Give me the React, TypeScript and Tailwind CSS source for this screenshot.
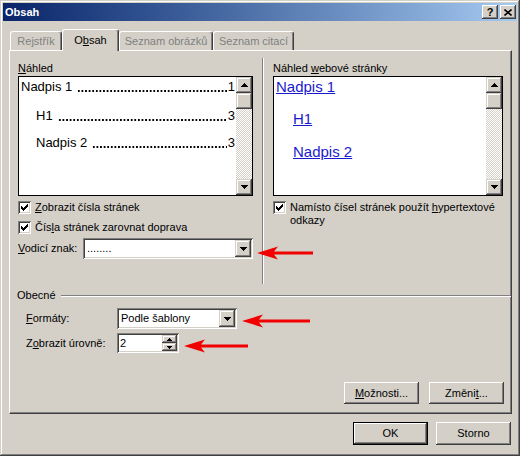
import React from 'react';

const raised =
  'shadow-[inset_-1px_-1px_#404040,inset_1px_1px_#ffffff,inset_-2px_-2px_#808080,inset_2px_2px_#d4d0c8]';
const scrollBtn =
  'shadow-[inset_-1px_-1px_#404040,inset_1px_1px_#d4d0c8,inset_-2px_-2px_#808080,inset_2px_2px_#ffffff]';
const sunken =
  'shadow-[inset_1px_1px_#808080,inset_-1px_-1px_#ffffff,inset_2px_2px_#404040,inset_-2px_-2px_#d4d0c8]';

// pixel triangle, 7x4
function Tri({ down = false }: { down?: boolean }) {
  const rows = down ? [0, 1, 2, 3] : [3, 2, 1, 0];
  return (
    <svg width="7" height="4" viewBox="0 0 7 4" shapeRendering="crispEdges" className="block">
      {rows.map((r, i) => (
        <rect key={i} x={r} y={i} width={7 - r * 2} height="1" fill="#000" />
      ))}
    </svg>
  );
}

function SmallTri({ down = false }: { down?: boolean }) {
  const rows = down ? [0, 1, 2] : [2, 1, 0];
  return (
    <svg width="5" height="3" viewBox="0 0 5 3" shapeRendering="crispEdges" className="block">
      {rows.map((r, i) => (
        <rect key={i} x={r} y={i} width={5 - r * 2} height="1" fill="#000" />
      ))}
    </svg>
  );
}

function ScrollBar() {
  return (
    <div className="flex w-[16px] shrink-0 flex-col">
      <div className={`flex h-[16px] items-center justify-center bg-[#d4d0c8] ${scrollBtn}`}>
        <Tri />
      </div>
      <div className={`h-[16px] bg-[#d4d0c8] ${scrollBtn}`} />
      <div className="flex-1 bg-[image:repeating-conic-gradient(#ffffff_0_25%,#d4d0c8_0_50%)] bg-[length:2px_2px]" />
      <div className={`flex h-[16px] items-center justify-center bg-[#d4d0c8] ${scrollBtn}`}>
        <Tri down />
      </div>
    </div>
  );
}

function CheckBox() {
  const cols = [5, 6, 7, 6, 5, 4, 3];
  return (
    <div className={`h-[13px] w-[13px] shrink-0 bg-white ${sunken}`}>
      <svg width="13" height="13" viewBox="0 0 13 13" shapeRendering="crispEdges" className="block">
        {cols.map((y, i) => (
          <rect key={i} x={3 + i} y={y} width="1" height="3" fill="#000" />
        ))}
      </svg>
    </div>
  );
}

function Combo({ className, children }: { className: string; children: React.ReactNode }) {
  return (
    <div className={`flex h-[21px] bg-white p-[2px] ${sunken} ${className}`}>
      <div className="flex min-w-0 flex-1 items-center overflow-hidden whitespace-nowrap pl-[2px]">{children}</div>
      <div className={`flex w-[16px] items-center justify-center bg-[#d4d0c8] ${scrollBtn}`}>
        <Tri down />
      </div>
    </div>
  );
}

function Btn({ className = 'h-[22px]', children }: { className?: string; children: React.ReactNode }) {
  return (
    <div className={`flex w-[75px] items-center justify-center bg-[#d4d0c8] ${raised} ${className}`}>{children}</div>
  );
}

function Tab({ active = false, className, children }: { active?: boolean; className: string; children: React.ReactNode }) {
  return (
    <div
      className={`flex items-center justify-center rounded-t-[3px] border-x border-t border-l-white border-t-white border-r-[#404040] bg-[#d4d0c8] shadow-[inset_-1px_0_#808080] ${
        active ? 'h-[22px] text-black' : 'mb-[1px] h-[19px] text-[#808080]'
      } ${className}`}
    >
      {children}
    </div>
  );
}

// TOC line with dot leaders drawn as a background
function LeaderRow({ className, text, num }: { className: string; text: string; num: string }) {
  return (
    <div className={`flex h-[20px] whitespace-nowrap pr-[1px] ${className}`}>
      <span>{text}</span>
      <span className="ml-[5px] mr-[1px] min-w-0 flex-1 bg-[image:radial-gradient(circle,#000_0.8px,transparent_1.2px)] bg-[length:3.6px_4px] bg-[position:0_12px] bg-repeat-x" />
      <span>{num}</span>
    </div>
  );
}

function RedArrow({ className, w }: { className: string; w: number }) {
  return (
    <svg className={`absolute ${className}`} width={w} height="14" viewBox={`0 0 ${w} 14`}>
      <path d={`M0 7L21 0.5L17 5.5H${w}V8.5H17L21 13.5Z`} fill="#f20000" />
    </svg>
  );
}

export default function App() {
  return (
    <div className="relative flex h-[456px] w-[520px] flex-col bg-[#d4d0c8] p-[3px] font-['Liberation_Sans',Arial,sans-serif] text-[11px] leading-[13px] text-black shadow-[inset_-1px_-1px_#404040,inset_1px_1px_#d4d0c8,inset_-2px_-2px_#808080,inset_2px_2px_#ffffff]">
      {/* title bar */}
      <div className="flex h-[18px] shrink-0 items-center justify-between bg-linear-to-r from-[#0a246a] to-[#a6caf0] pl-[2px] pr-[1px]">
        <span className="font-bold text-white">Obsah</span>
        <div className="flex gap-[2px]">
          <div className={`flex h-[14px] w-[16px] items-center justify-center bg-[#d4d0c8] font-bold ${raised}`}>?</div>
          <div className={`flex h-[14px] w-[16px] items-center justify-center bg-[#d4d0c8] ${raised}`}>
            <svg width="8" height="7" viewBox="0 0 8 7" className="block">
              <path d="M0.5 0.5L7.5 6.5M7.5 0.5L0.5 6.5" stroke="#000" strokeWidth="1.6" />
            </svg>
          </div>
        </div>
      </div>

      {/* tabs */}
      <div className="relative z-10 -mb-[1px] ml-[7px] mt-[8px] flex h-[22px] items-end">
        <Tab className="w-[52px]">Rejstřík</Tab>
        <Tab active className="w-[57px]">
          <span>
            O<u>b</u>sah
          </span>
        </Tab>
        <Tab className="w-[94px]">Seznam obrázků</Tab>
        <Tab className="w-[81px]">Seznam citací</Tab>
      </div>

      {/* tab panel */}
      <div className="ml-[6px] flex h-[364px] w-[503px] flex-col border border-white border-r-[#404040] border-b-[#404040] shadow-[inset_-1px_-1px_#808080]">
        <div className="flex items-start">
          <div className="ml-[8px] mt-[11px] flex w-[235px] flex-col">
            <div className="h-[13px]">
              <u>N</u>áhled
            </div>
            <div className="mt-[1px] flex h-[120px] border border-black bg-white">
              <div className="flex min-w-0 flex-1 flex-col text-[13px] leading-[20px]">
                <LeaderRow className="pl-[2px]" text="Nadpis 1" num="1" />
                <LeaderRow className="mt-[9px] pl-[17px]" text="H1" num="3" />
                <LeaderRow className="mt-[7px] pl-[17px]" text="Nadpis 2" num="3" />
              </div>
              <ScrollBar />
            </div>
            <div className="mt-[5px] flex h-[13px] items-center">
              <CheckBox />
              <span className="ml-[4px] whitespace-nowrap">
                <u>Z</u>obrazit čísla stránek
              </span>
            </div>
            <div className="mt-[7px] flex h-[13px] items-center">
              <CheckBox />
              <span className="ml-[4px] whitespace-nowrap">
                Čís<u>l</u>a stránek zarovnat doprava
              </span>
            </div>
            <div className="mt-[4px] flex h-[21px] items-center">
              <span className="w-[65px]">
                <u>V</u>odicí znak:
              </span>
              <Combo className="w-[170px]">........</Combo>
            </div>
          </div>

          <div className="ml-[9px] mt-[7px] h-[226px] w-[2px] border-l border-r border-l-[#808080] border-r-white" />

          <div className="ml-[9px] mt-[11px] flex w-[230px] flex-col">
            <div className="h-[13px]">
              Náhled <u>w</u>ebové stránky
            </div>
            <div className="mt-[1px] flex h-[120px] border border-black bg-white">
              <div className="flex min-w-0 flex-1 flex-col text-[15px] leading-[20px] text-[#1a1acd]">
                <div className="h-[20px] pl-[2px]">
                  <span className="underline">Nadpis 1</span>
                </div>
                <div className="mt-[12px] h-[20px] pl-[19px]">
                  <span className="underline">H1</span>
                </div>
                <div className="mt-[13px] h-[20px] pl-[19px]">
                  <span className="underline">Nadpis 2</span>
                </div>
              </div>
              <ScrollBar />
            </div>
            <div className="mt-[5px] flex items-start">
              <CheckBox />
              <span className="ml-[4px] whitespace-nowrap">
                Namísto čísel stránek použít <u>h</u>ypertextové
                <br />
                odkazy
              </span>
            </div>
          </div>
        </div>

        {/* Obecné */}
        <div className="mt-[5px] flex h-[13px] items-center pl-[7px]">
          <span>Obecné</span>
          <div className="ml-[5px] h-[2px] flex-1 border-t border-b border-t-[#808080] border-b-white" />
        </div>
        <div className="mt-[6px] flex h-[21px] items-center pl-[16px]">
          <span className="w-[91px]">
            <u>F</u>ormáty:
          </span>
          <Combo className="w-[120px]">Podle šablony</Combo>
        </div>
        <div className="mt-[4px] flex h-[20px] items-center pl-[16px]">
          <span className="w-[91px]">
            Z<u>o</u>brazit úrovně:
          </span>
          <div className={`flex h-[20px] w-[62px] bg-white p-[2px] ${sunken}`}>
            <div className="flex flex-1 items-center pl-[1px]">2</div>
            <div className="flex w-[15px] flex-col">
              <div className={`flex flex-1 items-center justify-center bg-[#d4d0c8] ${scrollBtn}`}>
                <SmallTri />
              </div>
              <div className={`flex flex-1 items-center justify-center bg-[#d4d0c8] ${scrollBtn}`}>
                <SmallTri down />
              </div>
            </div>
          </div>
        </div>

        <div className="mt-[29px] flex justify-end gap-[10px] pr-[7px]">
          <Btn>
            <span>
              <u>M</u>ožnosti...
            </span>
          </Btn>
          <Btn>
            <span>
              Změni<u>t</u>...
            </span>
          </Btn>
        </div>
      </div>

      {/* dialog buttons */}
      <div className="mt-[8px] flex justify-end gap-[8px] pr-[6px]">
        <div className="h-[23px] w-[75px] border border-black">
          <div className={`flex h-full w-full items-center justify-center bg-[#d4d0c8] ${raised}`}>OK</div>
        </div>
        <Btn className="h-[23px]">Storno</Btn>
      </div>

      <RedArrow className="left-[257px] top-[246px]" w={56} />
      <RedArrow className="left-[242px] top-[314px]" w={68} />
      <RedArrow className="left-[184px] top-[339px]" w={64} />
    </div>
  );
}
